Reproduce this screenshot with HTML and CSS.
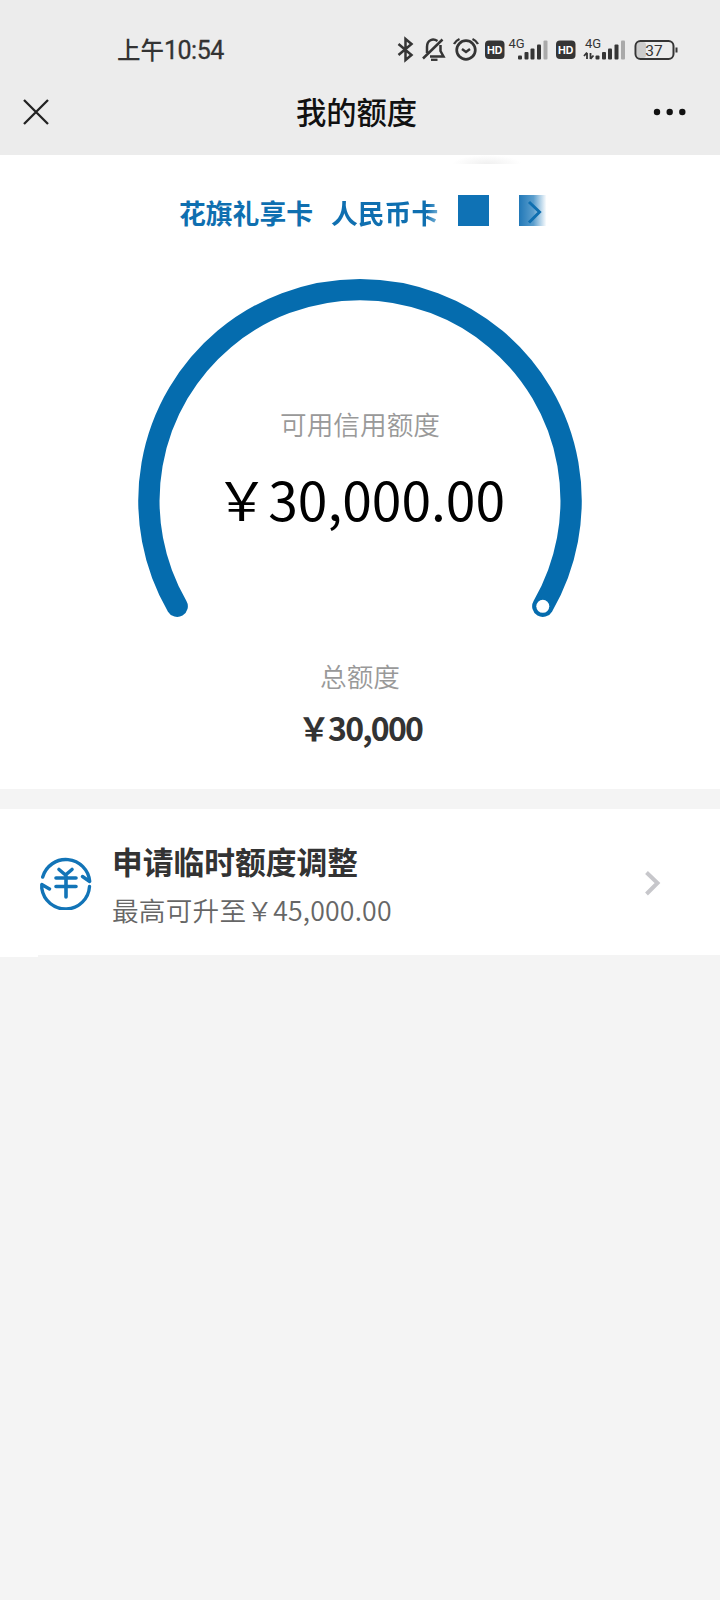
FILE: index.html
```html
<!DOCTYPE html>
<html lang="zh-CN">
<head>
<meta charset="utf-8">
<title>我的额度</title>
<link rel="stylesheet" href="styles.css">
</head>
<body>
<header class="top">
  <div class="status">
    <span class="time">上午<span class="clock">10:54</span></span>
    <div class="status-icons">
      <svg width="26" height="32" viewBox="0 0 26 32" class="line"><path d="M3.500 11 16.500 22 10.500 27V6L16.500 11 3.500 22" stroke-width="2.500"/></svg>
      <svg width="31" height="32" viewBox="0 0 31 32" class="line"><path d="M6 20V14C6 6 12.500 5.500 16.500 8M19.500 12V18L22.500 23.500H9M2 25.500 21.500 6.500" stroke-width="2.500"/><path d="M10 26.800H16.500" stroke-width="2.300"/></svg>
      <svg width="32" height="32" viewBox="0 0 32 32" class="line"><circle cx="14" cy="17" r="9.300" stroke-width="2.700"/><path d="M2 11Q4 7.500 7.500 6M20.500 6Q24 7.500 26 11" stroke-width="2.400"/><path d="M10 16 14 19 18 16" stroke-width="2.400"/></svg>
      <svg width="24" height="32" viewBox="0 0 24 32"><rect x="1" y="7.500" width="19.500" height="18.500" rx="4" fill="#353535"/><text x="10.700" y="20.500" class="hd">HD</text></svg>
      <svg width="48" height="32" viewBox="0 0 48 32"><text x="0.500" y="14.500" class="net">4G</text><g fill="#353535"><rect x="10" y="22.500" width="4" height="4" rx="1"/><rect x="16.500" y="19" width="4" height="7.500" rx="1"/><rect x="22.500" y="15.500" width="4" height="11" rx="1"/><rect x="29" y="11.500" width="4" height="15" rx="1"/></g><rect x="35.500" y="7.500" width="4" height="19" rx="1" fill="#aaa"/></svg>
      <svg width="24" height="32" viewBox="0 0 24 32"><rect x="0" y="7.500" width="19.500" height="18.500" rx="4" fill="#353535"/><text x="9.700" y="20.500" class="hd">HD</text></svg>
      <svg width="52" height="32" viewBox="0 0 52 32"><text x="5" y="14.500" class="net">4G</text><path d="M7 20V26M4 23 7 19.500M10.500 20V26M10.500 26 13.500 22.500" fill="none" stroke="#353535" stroke-width="1.800"/><g fill="#353535"><rect x="15.500" y="22.500" width="4" height="4" rx="1"/><rect x="22" y="19" width="4" height="7.500" rx="1"/><rect x="28" y="15.500" width="4" height="11" rx="1"/><rect x="34.500" y="11.500" width="4" height="15" rx="1"/></g><rect x="41" y="7.500" width="4" height="19" rx="1" fill="#aaa"/></svg>
      <svg width="48" height="32" viewBox="0 0 48 32"><rect x="5" y="9" width="9" height="16" rx="3" fill="#ccc"/><rect x="3.500" y="8" width="38" height="18" rx="5" fill="none" stroke="#353535" stroke-width="2"/><rect x="43.500" y="14.500" width="2" height="5" fill="#353535"/><text x="22" y="22.500" class="battery">37</text></svg>
    </div>
  </div>
  <nav class="nav">
    <svg width="28" height="28" viewBox="0 0 28 28"><path d="M2 2 26 26M26 2 2 26" stroke="#222" stroke-width="2.300"/></svg>
    <h1 class="title">我的额度</h1>
    <svg width="34" height="8" viewBox="0 0 34 8" fill="#111"><circle cx="4" cy="4" r="3.200"/><circle cx="16.700" cy="4" r="3.200"/><circle cx="29.300" cy="4" r="3.200"/></svg>
  </nav>
</header>
<main>
  <section class="limit">
    <div class="smudge"></div>
    <div class="card">
      <span class="card-name">花旗礼享卡</span>
      <span class="card-type">人民币卡</span>
      <span class="mask"></span>
      <span class="more"><svg width="29" height="31" viewBox="0 0 29 31"><path d="M10 7 20.500 17 10 27.500" fill="none" stroke="#0f6fb0" stroke-width="3"/></svg></span>
    </div>
    <div class="gauge">
      <svg class="arc" width="446" height="340" viewBox="137 278 446 340"><path d="M177.200 606.300A211.100 211.100 0 1 1 542.800 606.300" fill="none" stroke="#056cae" stroke-width="21.300" stroke-linecap="round"/><circle cx="542.800" cy="606.300" r="6.500" fill="#fff"/></svg>
      <div class="reading">
        <span class="label">可用信用额度</span>
        <span class="amount">￥30,000.00</span>
      </div>
    </div>
    <span class="label">总额度</span>
    <span class="total">￥30,000</span>
  </section>
  <section class="adjust">
    <svg class="coin" width="54" height="54" viewBox="0 0 54 54"><path d="M3.700 21A24 24 0 0 1 50.700 25.500L43.500 20.500M2.800 32.500A24 24 0 0 0 50.500 30.500M10.500 33 2.800 28.500V32.500" stroke-width="3.400"/><path d="M20 13.500 26.500 19 33 13.500M17 22H37M17 30.500H37M27 20V41" stroke-width="3.600"/></svg>
    <div class="copy">
      <h2 class="headline">申请临时额度调整</h2>
      <p class="detail">最高可升至￥45,000.00</p>
    </div>
    <svg width="18" height="26" viewBox="0 0 18 26"><path d="M2.500 2.500 13.500 13 2.500 24" fill="none" stroke="#c7c7cb" stroke-width="4"/></svg>
  </section>
  <div class="foot-line"></div>
</main>
</body>
</html>
```
FILE: styles.css
```css
* { box-sizing: border-box; }
body {
  margin: 0;
  min-height: 1600px;
  background: #f4f4f4;
  font-family: "Noto Sans CJK SC", sans-serif;
  color: #333;
}
h1, h2, p { margin: 0; }
svg { display: block; flex: none; }
.top { height: 155px; background: #ececec; }
.status {
  height: 78px;
  padding: 33px 40px 0 117px;
  display: flex;
  justify-content: space-between;
}
.time { font-size: 23.5px; line-height: 32px; font-weight: 500; }
.clock {
  font-family: Roboto, sans-serif;
  font-size: 25px;
  font-weight: 400;
  letter-spacing: -0.5px;
  -webkit-text-stroke: 0.3px #333;
}
.status-icons { display: flex; }
.line { fill: none; stroke: #353535; }
.hd { font: 700 10.5px Inter, sans-serif; fill: #fff; text-anchor: middle; }
.net { font: 400 13px Roboto, sans-serif; fill: #353535; }
.battery { font: 400 15.5px Roboto, sans-serif; fill: #353535; text-anchor: middle; }
.nav {
  height: 68px;
  padding: 0 33px 0 22px;
  display: flex;
  align-items: center;
  justify-content: space-between;
}
.title {
  padding: 0 0 3px 10px;
  font-size: 30.3px;
  line-height: 44px;
  font-weight: 500;
  color: #111;
}
.limit {
  height: 634px;
  background: #fff;
  display: flex;
  flex-direction: column;
  align-items: center;
}
.smudge {
  width: 70px;
  height: 9px;
  margin-left: 254px;
  background: radial-gradient(ellipse at 50% 100%, #f0f0f0, #fff 70%);
}
.card {
  width: 369px;
  height: 44px;
  margin: 27px 0 0 7px;
  display: flex;
  align-items: flex-start;
  font-size: 26.8px;
  line-height: 43px;
  font-weight: 700;
  color: #0f6fb0;
  white-space: nowrap;
}
.card-name { width: 152px; }
.card-type {
  width: 127px;
  background: linear-gradient(100deg, #0f6fb0 74%, #a8d0e8 87%);
  -webkit-background-clip: text;
  background-clip: text;
  color: transparent;
}
.mask { width: 31px; height: 31px; margin: 4px 30px 0 0; background: #0f72b5; }
.more {
  width: 29px;
  height: 31px;
  margin-top: 4px;
  overflow: hidden;
  background: linear-gradient(90deg, #2178b7, #5b9ecd 50%, #fff 95%);
}
.gauge { width: 446px; height: 340px; margin-top: 43px; display: grid; }
.arc, .reading { grid-area: 1 / 1; }
.reading {
  padding-top: 126px;
  display: flex;
  flex-direction: column;
  align-items: center;
}
.label { font-size: 26.67px; line-height: 40px; font-weight: 350; color: #999; }
.amount { margin-top: 16px; font-size: 53.33px; line-height: 76px; color: #000; }
.gauge + .label { margin-top: 38px; }
.total {
  margin-top: 8px;
  font-size: 32px;
  line-height: 46px;
  font-weight: 700;
  letter-spacing: -1.8px;
}
.adjust {
  height: 146px;
  margin-top: 20px;
  padding: 2px 58px 0 39px;
  display: flex;
  align-items: center;
  background: #fff;
}
.coin { fill: none; stroke: #1274b7; stroke-linecap: round; stroke-linejoin: round; }
.copy { flex: 1; padding: 1px 0 0 19px; }
.headline { font-size: 30.75px; line-height: 46px; font-weight: 700; }
.detail {
  margin-top: 6px;
  font-size: 26.67px;
  line-height: 40px;
  font-weight: 350;
  letter-spacing: 0.2px;
  color: #666;
}
.foot-line { width: 38px; height: 2px; background: #fff; }
```
